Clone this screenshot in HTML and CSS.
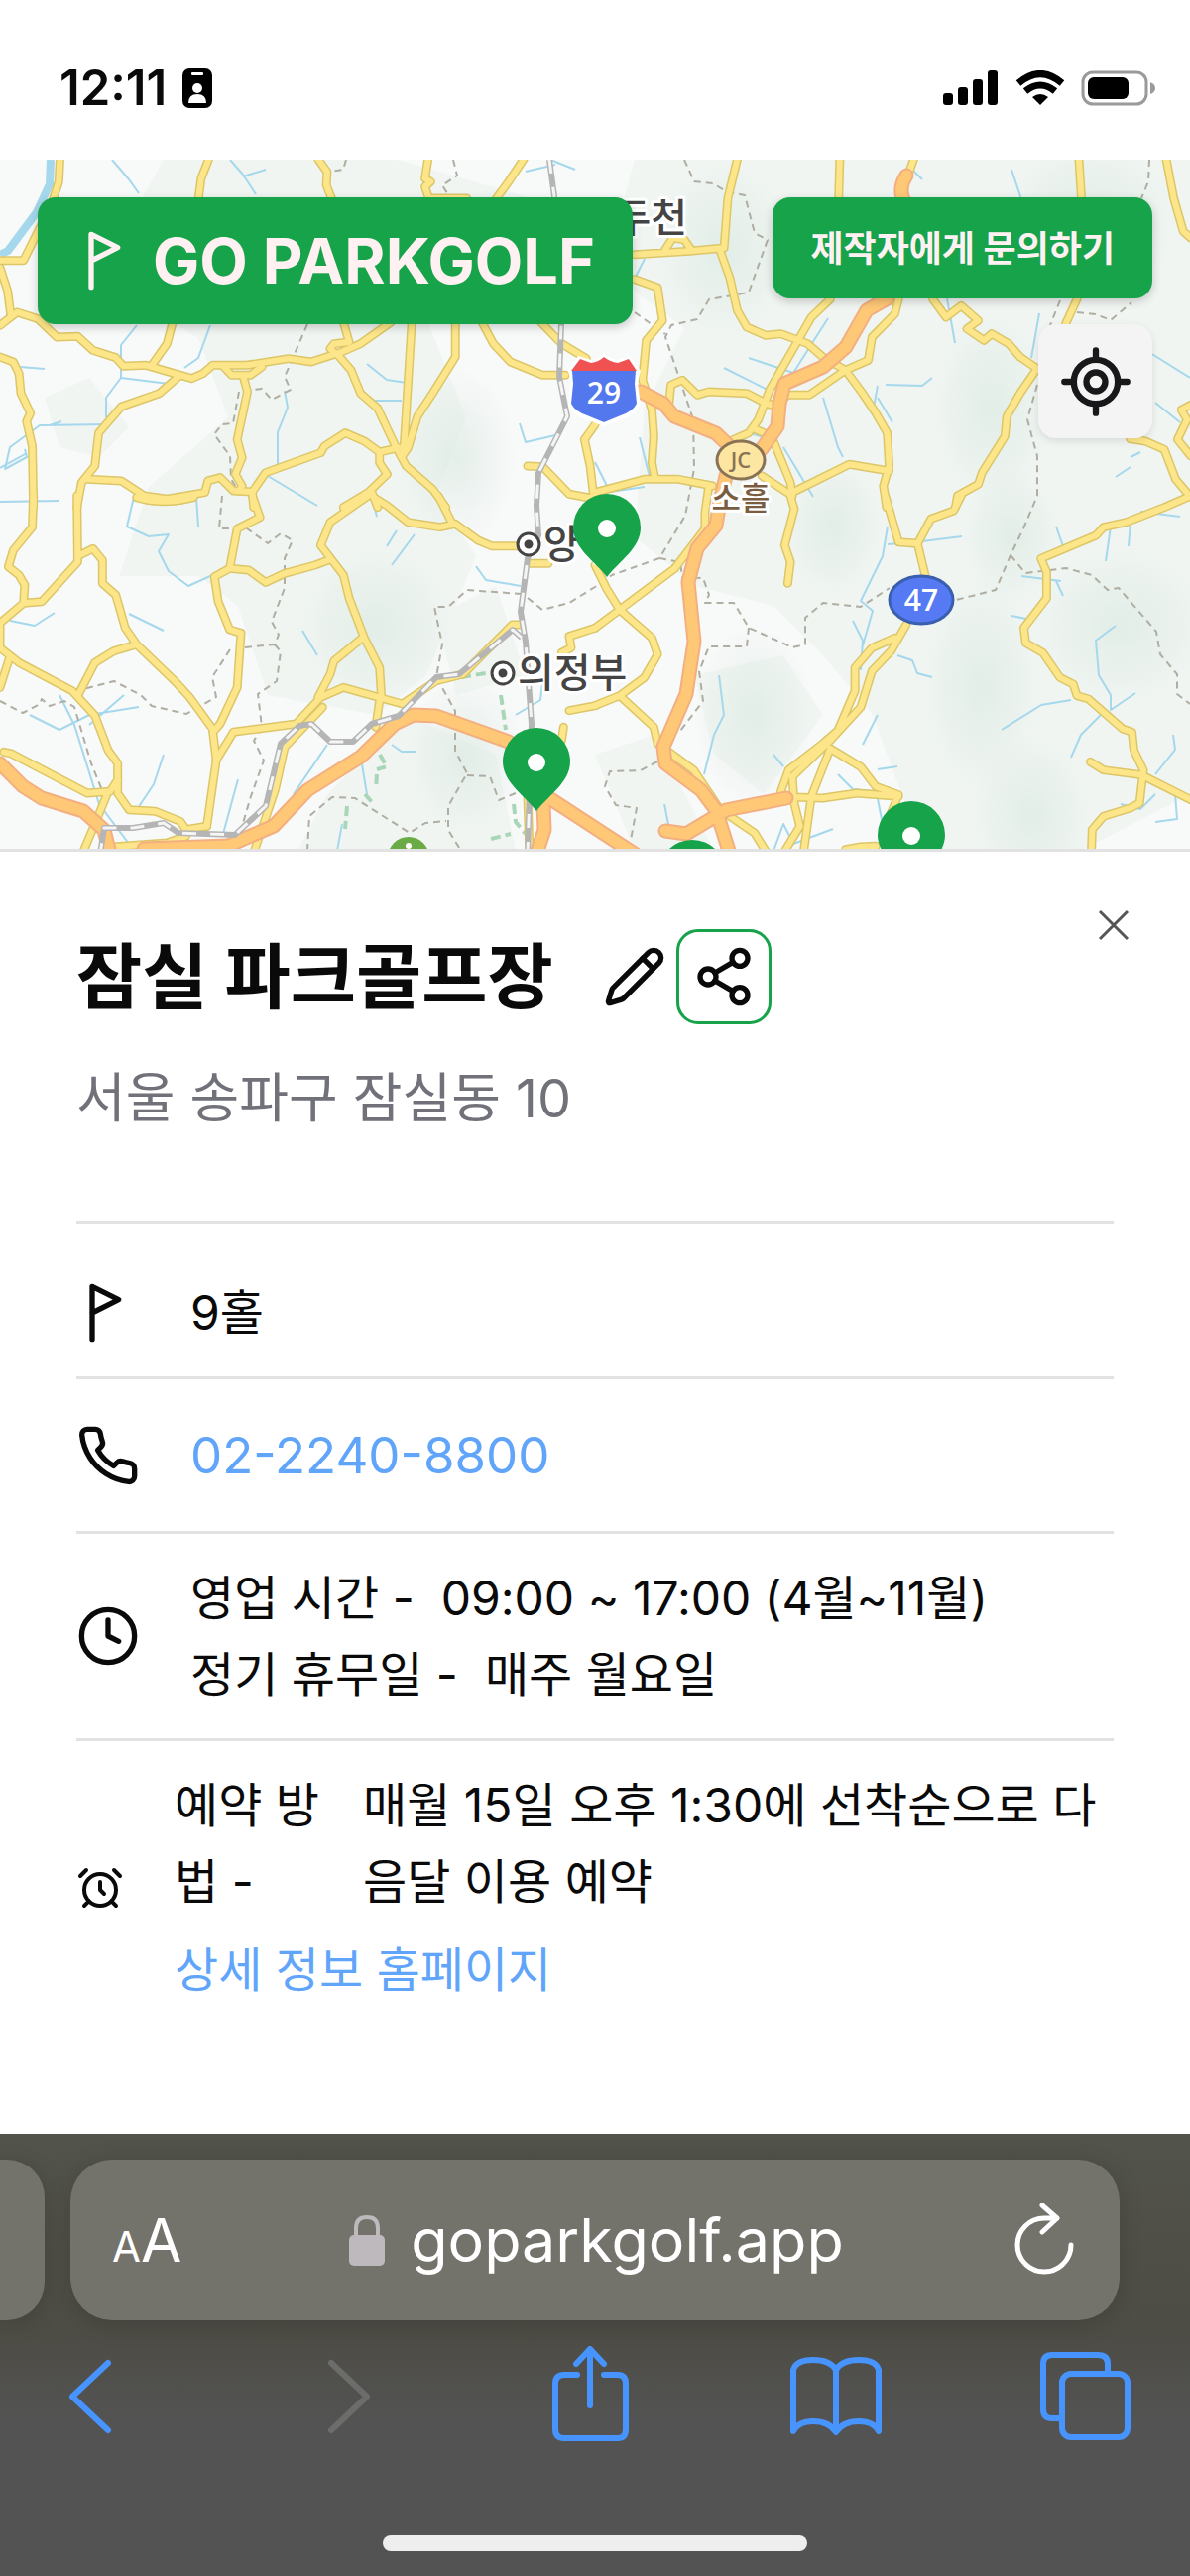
FILE: index.html
```html
<!DOCTYPE html>
<html lang="ko">
<head>
  <meta charset="UTF-8" />
  <meta name="viewport" content="width=device-width, initial-scale=1" />
  <title>GO PARKGOLF</title>
  <link rel="stylesheet" href="styles.css">
</head>
<body>
  <!-- 상태 표시줄 -->
  <header class="status-bar">
    <div class="status-left">
      <span class="time">12:11</span>
      <svg width="30" height="40" viewBox="0 0 30 40">
        <rect width="30" height="40" rx="7"/>
        <rect x="9" y="4" width="12" height="3" rx="1" fill="#fff"/>
        <circle cx="15" cy="20" r="5" fill="#fff"/>
        <path d="M6 35 Q6 26 15 26 Q24 26 24 35 Z" fill="#fff"/>
      </svg>
    </div>
    <div class="status-right">
      <svg width="57" height="36" viewBox="0 0 57 36">
        <rect x="0" y="23" width="10" height="12" rx="3"/>
        <rect x="15" y="17" width="10" height="18" rx="3"/>
        <rect x="30" y="9" width="10" height="26" rx="3"/>
        <rect x="45" y="0" width="10" height="35" rx="3"/>
      </svg>
      <svg width="50" height="36" viewBox="0 0 50 36">
        <path d="M3 13 Q25 -6 47 13" fill="none" stroke="#000" stroke-width="7"/>
        <path d="M10 21 Q25 9 40 21" fill="none" stroke="#000" stroke-width="7"/>
        <path d="M25 35 L17 27 Q25 21 33 27 Z"/>
      </svg>
      <svg width="76" height="36" viewBox="0 0 76 36">
        <rect x="2" y="2" width="64" height="32" rx="10" fill="none" stroke="#9a9a9a" stroke-width="3"/>
        <rect x="7" y="7" width="41" height="22" rx="6"/>
        <path d="M70 12 Q75 14 75 18 Q75 22 70 24 Z" fill="#9a9a9a"/>
      </svg>
    </div>
  </header>

  <!-- 지도 -->
  <main class="map">
    <svg class="map-canvas" viewBox="0 0 1200 697" preserveAspectRatio="xMidYMin slice">
      <defs>
        <radialGradient id="hill">
          <stop offset="0" stop-color="#dceae2" stop-opacity="0.7"/>
          <stop offset="1" stop-color="#dceae2" stop-opacity="0"/>
        </radialGradient>
        <g id="roads">
          <g transform="translate(0 -11) scale(.3827 .3333)">
            <path d="M158 31L155 100L135 170L62 338L0 338M550 31L530 90L522 160M838 31L862 70L860 110L877 160M1128 31L1120 90L1135 100L1120 115L1130 150L1230 150M1380 31L1340 100L1305 155M0 360L20 430L28 500"/>
            <path d="M0 535L45 495L100 515L150 570L205 568L245 610L305 632L325 658L385 655L505 695L535 680L560 655L650 655L760 635L820 645L900 615L950 590L1030 525M455 525L440 590L400 655M905 525L920 585L880 590L870 605L895 630L925 670L950 740L995 785L1040 895L1070 960L1140 1030L1175 1085"/>
            <path d="M0 630L35 645L50 680L55 740L80 800L70 825L85 900L88 1085M470 690L420 740L320 780L260 860L250 960L215 1010L203 1085M590 660L610 685L660 685L690 660M640 685L652 735L625 880L638 935L620 985L638 1020L630 1035"/>
            <path d="M230 1000L320 1005L380 1050L440 1060L540 1040L548 1005L580 995L615 1035L665 1038L700 980L845 920L855 900L910 860L960 885L1000 918L1050 905M665 1038L668 1085M1085 525L1065 890L1060 920M1200 525L1200 630L1140 740L1100 810L1075 905L1060 930M1000 918L1000 950L1020 985L970 1040L905 1085M980 1040L995 1085"/>
            <path d="M1270 525L1300 590L1345 645L1430 685L1490 685M1425 525L1480 590L1545 635M1390 960L1430 962L1500 1045L1570 1060M1568 835L1540 880L1555 960L1565 1060"/>
          </g>
          <g transform="translate(600 -11) scale(.3827 .3333)">
            <path d="M375 31L350 150L340 300L250 310L105 320M185 305L205 270L235 275L255 308M330 310L355 390L375 490L400 540L450 565L490 560L560 590L600 630L660 670L705 740L740 800L770 860L775 960L760 1020L768 1085M645 31L642 155M840 31L825 80M1275 31L1282 155M1505 31L1525 150L1550 250L1570 270"/>
            <path d="M105 395L165 420L178 520L135 580L125 700L150 790L155 870L150 950L158 998M0 1040L130 1000L220 1000L310 1020M620 455L570 510L530 590L460 730L430 820L405 860L365 880M800 455L790 500L730 570L720 640L660 670L565 745L510 745L465 775M195 775L200 715L230 700L270 745L300 735L400 740L450 770L465 775"/>
            <path d="M890 455L925 510L965 475L1010 520L980 545L1025 580L1045 560L1090 590L1120 630L1165 665L1120 740L1085 810L1080 870L1020 980L1010 1015L955 1050L950 1085M1270 455L1240 530M1410 878L1450 885L1500 910L1530 1000L1570 1055M1570 775L1545 790L1560 820L1535 880L1570 930M425 850L465 870L515 1010L520 1050L440 990M520 1040L670 955L775 975"/>
          </g>
          <g transform="translate(0 339) scale(.3827 .3333)">
            <path d="M88 0L85 95L35 165L22 215L50 240L65 270L62 325M203 0L205 200L110 320L62 325L0 385L0 460M210 180L245 160L270 195L270 265L305 300L330 400L360 450L460 560L500 610L560 705L570 800M360 450L300 470L250 505L205 605"/>
            <path d="M0 460L50 505L190 590L250 665L285 770L310 810L310 900L340 950L410 955L475 985L490 1010L545 1000M25 490L0 580M360 5Q430 30 510 5M665 0L685 65L625 100L605 220L565 245L575 320L605 405L635 415L625 580L580 690L565 710M605 220L655 225L700 262L750 235L830 210L865 195"/>
            <path d="M970 0L870 80L845 150L905 240L920 310L960 430L1000 520L1005 610M985 5L1020 30L1075 80L1160 95L1200 85L1260 135L1295 152L1370 152M1155 0L1190 80M955 430L880 500L870 540L838 610M545 1000L570 800L615 715L780 690L845 610L905 580L1060 630L1150 560L1220 540L1350 390L1370 390"/>
            <path d="M10 775L30 780L230 900L290 895L310 860M285 895L255 980L220 1075M850 640L750 760L725 890L670 1075M1000 620L990 700M1568 400L1500 425L1505 460L1480 475M1570 635L1500 650M1485 700L1480 740M1390 900L1395 1075M1395 205L1445 205M300 1062L440 1050L490 1030"/>
          </g>
          <g transform="translate(600 339) scale(.3827 .3333)">
            <path d="M0 210L30 280L65 345L150 430L165 480L130 550L65 605L0 635M0 400L65 345L210 220L290 100L290 50L300 -30M65 605L155 700L165 750L260 830L330 950L420 1020L450 1075M515 0L525 40L500 150L515 200L508 265M765 0L800 140L850 145L870 240M850 145L885 70L945 45L965 0"/>
            <path d="M820 390L780 470L730 530L700 640L620 740L520 850L525 930L540 1000L500 1075M790 430L730 460L685 520L685 590L640 710L600 750L510 830L490 895M620 765L570 910L550 1075M620 765L700 820L740 880L800 905L780 960M525 912L600 915L690 900L800 910M660 1070L700 1062L740 1060"/>
            <path d="M1570 0L1500 35L1400 80L1340 95L1320 120L1175 190L1190 230L1190 310L1130 400L1135 445L1180 475L1225 550L1260 570L1270 605L1300 615L1390 705L1415 715L1420 770L1445 830L1435 930L1410 945L1340 970L1310 1010L1308 1075M1305 805L1340 830L1440 845L1570 920"/>
          </g>
        </g>
        <g id="highways">
          <path d="M914 16Q905 30 912 42M895 140L874 152L853 189L830 209L791 226L786 246L784 269L768 292L747 304M646 234L669 246L680 259L722 276L747 300L732 319L726 345L722 369L703 392L694 426L700 486L692 539L669 592L671 609L707 636L722 656L736 700M793 644L732 656L692 680L671 677"/>
          <path d="M0 609L23 632L42 644L84 657L105 676L111 700M145 695L230 692L276 672L310 636L364 602L398 569L417 560L440 561L513 587L548 640L600 674L640 700M548 650L549 676L541 700"/>
        </g>
        <g id="rail">
          <path d="M554 0L559 37L566 166L564 219L572 259L543 316L541 349L543 379L532 402L525 456L530 486L536 569L532 700M526 482L517 474L463 519L440 522L402 561L375 569L356 587L333 587L314 569L302 571L283 589L268 652L237 681L180 679L165 669L134 674L105 674L101 700"/>
        </g>
      </defs>

      <rect width="1200" height="697" fill="#f8f9f9"/>

      <!-- 산지 -->
      <g class="terrain">
        <path d="M165 0L290 0L400 0L540 40L530 90L430 160L470 260L440 340L480 400L430 520L380 560L270 540L240 450L200 420L120 420L150 330L230 260L200 180L150 150L120 80Z"/>
        <path d="M640 0L1200 0L1200 640L1090 697L930 697L880 560L830 500L780 450L700 430L640 380L650 250L690 170L610 110Z"/>
        <path d="M45 240L90 220L130 270L100 300L60 290ZM300 697L330 640L410 560L500 600L520 697ZM440 460L500 430L530 520L460 540ZM600 600L660 580L720 697L640 697ZM700 520L790 500L830 560L770 640L720 600Z"/>
      </g>
      <g fill="url(#hill)">
        <ellipse cx="730" cy="90" rx="70" ry="90"/>
        <ellipse cx="1000" cy="250" rx="60" ry="100"/>
        <ellipse cx="840" cy="370" rx="50" ry="70"/>
        <ellipse cx="1100" cy="60" rx="90" ry="80"/>
        <ellipse cx="990" cy="530" rx="60" ry="110"/>
        <ellipse cx="1130" cy="470" rx="90" ry="80"/>
        <ellipse cx="1040" cy="660" rx="60" ry="80"/>
        <ellipse cx="760" cy="560" rx="60" ry="90"/>
        <ellipse cx="470" cy="600" rx="60" ry="80"/>
        <ellipse cx="380" cy="470" rx="80" ry="80"/>
        <ellipse cx="460" cy="300" rx="60" ry="90"/>
        <ellipse cx="1020" cy="380" rx="50" ry="70"/>
      </g>

      <!-- 하천 -->
      <path d="M51 0L50 25L37 53L8 92L0 96" class="river"/>
      <g class="streams">
        <path d="M113 0L130 20L140 34M232 0L245 15L258 35M245 17L268 10M212 167L200 200L186 210M138 167L122 187L122 220L170 226M20 209L45 211M122 220L107 240L107 260M107 267L40 268L10 290L5 312L27 300L25 292M0 311L27 296M50 268L62 264M287 233L290 250L280 275L280 308M270 319L320 349M370 206L390 222L410 225M378 243L405 243M524 266L530 285L560 278M555 0L580 10M530 12L560 5"/>
        <path d="M0 345L60 344M135 340L128 370L150 380L170 378L160 395L170 415L190 430L212 420M198 340L200 370M130 458L165 475M10 465L35 470L55 457M125 540L90 570M30 560L60 575L90 560L140 552M395 409L418 378M480 410L490 424L525 430M305 475L320 500M400 374L390 390M375 340L380 360M60 540L75 570L100 650L130 690M165 600L155 630L135 660M240 625L225 680M296 640L330 590M365 610L370 640M395 590L405 597L420 597M520 560L545 545L548 520M320 625L310 640L340 620M340 697L345 670"/>
        <path d="M640 120L650 100M645 280L655 320M755 200L800 215L835 160M730 210L780 235M893 227L930 228L940 220M885 240L900 265M885 228L880 255M790 290L820 340M830 240L845 290L850 300M770 280L752 275M915 5L930 20M1020 10L1030 40M1048 155L1040 200M955 140L963 185M1160 195L1200 220M1165 245L1190 265M1140 300L1150 295M1125 320L1140 310M600 305L615 335L650 330"/>
        <path d="M895 370L890 400L868 445L880 455L870 490M895 388L930 385L970 380M860 465L870 485L868 515M905 500L920 505L925 518L940 522M725 520L730 560L720 580L710 620M870 590L885 560M885 615L905 612M1010 575L1050 550L1080 545M1065 370L1072 390M1120 370L1115 405M1140 365L1138 390M1020 460L1035 463M1125 470L1105 485L1108 520L1120 540L1120 555L1145 538M1110 560L1090 580L1080 603M1165 620L1185 595L1183 580M1185 640L1187 665L1165 668M1130 650L1150 655L1165 640M780 600L790 612M845 620L860 635L880 637M670 650L675 675M780 697L790 670L800 690L840 675M885 645L890 670M1030 420L1070 425M1072 440L1065 425M1150 355L1190 360"/>
      </g>

      <!-- 행정 경계 -->
      <g class="borders">
        <path d="M349 0L346 10L325 13L333 31M457 0L461 16L446 26L453 37M310 166L287 219L293 232L274 242L264 231L256 232M241 234L235 266L224 267L216 277L232 299L233 322L239 332M690 0L700 22L719 24L732 32L751 36L761 74L774 81L755 134L715 141L703 161L677 167L671 179L688 229L699 262L700 312L691 359L665 402L617 419M640 154L671 176M1159 0L1158 22L1151 39M1086 154L1105 156L1120 162L1141 144M1069 142L1059 167M1046 227L1036 262L1046 299L1046 339L1032 372L1019 399L1004 434L964 444"/>
        <path d="M224 339L221 372L249 372L270 387L283 377L295 384L287 402L287 432L274 466L281 479L277 489L247 492M277 489L283 496L279 526L260 539L264 572L256 586L266 606L253 642L243 676M232 494L214 522L218 542L188 559L153 551L142 540L115 526L84 534M0 546L23 558L40 549L42 544L50 551L65 546L75 552L92 609L103 636M526 438L471 434L452 451L438 451L446 489L440 522L459 556L459 596L471 619L452 652L452 676L465 697M471 621L494 622L503 646L520 639M310 697L312 662L335 643L358 644L413 679L429 669L450 667M532 442L547 454L574 447L600 431L617 419"/>
        <path d="M665 402L686 406L688 421L709 422L715 439L711 447L740 447L755 472L799 492L812 489L812 462L830 447L868 451L897 432M755 472L753 491L715 491L705 516L709 546L686 576M663 607L646 616L615 617L610 632L621 651L642 654L636 686M1019 399L1034 417L1075 412L1101 419L1117 434L1128 432L1166 476L1170 499L1187 519L1187 539L1200 549"/>
      </g>
      <path d="M505 540L510 575M383 600L390 612L380 615M380 620L379 635M368 640L375 648M350 652L348 675M518 650L520 668L530 680M495 685L515 680M465 522L490 518" class="trail"/>

      <use href="#roads" class="road-edge"/>
      <use href="#roads" class="road"/>
      <use href="#highways" class="highway-edge"/>
      <use href="#highways" class="highway"/>
      <use href="#rail" class="rail-edge"/>
      <use href="#rail" class="rail"/>

      <!-- 지명 -->
      <g class="city">
        <text x="693" y="73" text-anchor="end">동두천</text>
        <text x="548" y="402">양주</text>
        <text x="522" y="532">의정부</text>
      </g>
      <text x="747" y="353" text-anchor="middle" class="town">소흘</text>
      <g class="city-dot">
        <circle cx="533" cy="388" r="11"/>
        <circle cx="533" cy="388" r="3"/>
        <circle cx="507" cy="518" r="11"/>
        <circle cx="507" cy="518" r="3"/>
      </g>

      <!-- 도로 번호 -->
      <path d="M583 198L596 202Q604 201 609 195Q615 201 623 202L635 198L646 213L643 225L646 248Q640 258 627 262L609 269L591 262Q578 258 573 248L576 225L573 213Z" fill="#fff"/>
      <path d="M585 201L596 205Q604 204 609 199Q615 204 623 205L634 201L642 213L576 213Z" fill="#f05252"/>
      <path d="M577 213L641 213L640 226L642 246Q638 254 626 258L609 265L592 258Q580 254 576 246L578 226Z" fill="#5378ee"/>
      <ellipse cx="747" cy="303" rx="24" ry="19" fill="#fde5a2" stroke="#8a7355" stroke-width="3"/>
      <ellipse cx="929" cy="444" rx="32" ry="24" fill="#567af3" stroke="#3a5fae" stroke-width="3"/>
      <g class="route">
        <text x="609" y="246">29</text>
        <text x="929" y="455">47</text>
        <text x="747" y="311" class="junction">JC</text>
      </g>

      <!-- 파크골프장 핀 -->
      <circle cx="412" cy="704" r="21" fill="#6aab45"/>
      <circle cx="412" cy="692" r="3" fill="#fff"/>
      <defs>
        <g id="pin">
          <path d="M0 83C-12 67 -34 54 -34 33A34 34 0 0 1 34 33C34 54 12 67 0 83Z" fill="#16a34a"/>
          <circle cy="34" r="9" fill="#fff"/>
        </g>
      </defs>
      <use href="#pin" x="612" y="338"/>
      <use href="#pin" x="541" y="574"/>
      <use href="#pin" x="919" y="648"/>
      <use href="#pin" x="698" y="687"/>
    </svg>

    <div class="map-controls">
      <button class="btn btn-logo">
        <svg class="icon" width="64" height="64" viewBox="0 0 24 24"><path d="M6 22V2l10 5-10 5"/></svg>
        GO PARKGOLF
      </button>
      <div class="map-side">
        <button class="btn btn-contact">제작자에게 문의하기</button>
        <button class="btn-locate" aria-label="현재 위치">
          <svg class="icon" width="76" height="76" viewBox="0 0 24 24">
            <circle cx="12" cy="12" r="7"/><circle cx="12" cy="12" r="3"/>
            <path d="M2 12h3M19 12h3M12 2v3M12 19v3"/>
          </svg>
        </button>
      </div>
    </div>
  </main>

  <!-- 상세 정보 -->
  <section class="sheet">
    <button class="btn-close" aria-label="닫기">
      <svg width="32" height="32" viewBox="0 0 32 32"><path d="M2 2L30 30M30 2L2 30"/></svg>
    </button>
    <div class="sheet-title">
      <h1>잠실 파크골프장</h1>
      <button class="btn-edit" aria-label="수정">
        <svg class="icon" width="64" height="64" viewBox="0 0 24 24">
          <path d="M21.174 6.812a1 1 0 0 0-3.986-3.987L3.842 16.174a2 2 0 0 0-.5.83l-1.321 4.352a.5.5 0 0 0 .623.622l4.353-1.32a2 2 0 0 0 .83-.497z"/>
          <path d="m15 5 4 4"/>
        </svg>
      </button>
      <button class="btn-share" aria-label="공유">
        <svg class="icon" width="64" height="64" viewBox="0 0 24 24">
          <circle cx="18" cy="5" r="3"/><circle cx="6" cy="12" r="3"/><circle cx="18" cy="19" r="3"/>
          <path d="M8.59 13.51l6.83 3.98M15.41 6.51l-6.82 3.98"/>
        </svg>
      </button>
    </div>
    <p class="address">서울 송파구 잠실동 10</p>

    <ul class="info">
      <li class="info-holes">
        <svg class="icon" width="64" height="64" viewBox="0 0 24 24"><path d="M6 22V2l10 5-10 5"/></svg>
        <span>9홀</span>
      </li>
      <li class="info-phone">
        <svg class="icon" width="64" height="64" viewBox="0 0 24 24">
          <path d="M22 16.92v3a2 2 0 0 1-2.18 2 19.79 19.79 0 0 1-8.63-3.07 19.5 19.5 0 0 1-6-6 19.79 19.79 0 0 1-3.07-8.67A2 2 0 0 1 4.11 2h3a2 2 0 0 1 2 1.72 12.84 12.84 0 0 0 .7 2.81 2 2 0 0 1-.45 2.11L8.09 9.91a16 16 0 0 0 6 6l1.27-1.27a2 2 0 0 1 2.11-.45 12.84 12.84 0 0 0 2.81.7A2 2 0 0 1 22 16.92z"/>
        </svg>
        <a href="tel:02-2240-8800">02-2240-8800</a>
      </li>
      <li class="info-hours">
        <svg class="icon" width="64" height="64" viewBox="0 0 24 24">
          <circle cx="12" cy="12" r="10"/><path d="M12 6v6l4 2"/>
        </svg>
        <div>
          <div>영업 시간 -&nbsp; 09:00 ~ 17:00 (4월~11월)</div>
          <div>정기 휴무일 -&nbsp; 매주 월요일</div>
        </div>
      </li>
      <li class="info-booking">
        <svg class="icon" width="48" height="48" viewBox="0 0 24 24">
          <circle cx="12" cy="13" r="8"/><path d="M12 9v4l2 2M5 3 2 6M22 6l-3-3M6.380 18.700 4 21M17.640 18.670 20 21"/>
        </svg>
        <div>
          <div class="booking">
            <span class="booking-label">예약 방법 -</span>
            <span>매월 15일 오후 1:30에 선착순으로 다음달 이용 예약</span>
          </div>
          <a href="#">상세 정보 홈페이지</a>
        </div>
      </li>
    </ul>
  </section>

  <!-- 브라우저 하단 -->
  <footer class="browser">
    <div class="tabs">
      <div class="tab-prev"></div>
      <div class="url-bar">
        <button class="btn-text" aria-label="글자 크기"><small>A</small>A</button>
        <div class="url">
          <svg width="36" height="52" viewBox="0 0 36 52">
            <rect y="21" width="36" height="31" rx="5" fill="#bdb9bd"/>
            <path d="M7 22V14Q7 3 18 3Q29 3 29 14V22" fill="none" stroke="#bdb9bd" stroke-width="4"/>
          </svg>
          <input type="text" value="goparkgolf.app" aria-label="주소">
        </div>
        <button class="btn-reload" aria-label="새로고침">
          <svg width="60" height="74" viewBox="0 0 60 74">
            <path d="M57 42A27 27 0 1 1 30 15H43M28 2L43 15L28 29"/>
          </svg>
        </button>
      </div>
    </div>
    <nav class="toolbar">
      <button aria-label="뒤로"><svg width="90" height="100" viewBox="0 0 90 100"><path d="M61 17L25 51L61 85"/></svg></button>
      <button class="off" aria-label="앞으로"><svg width="90" height="100" viewBox="0 0 90 100"><path d="M36 17L72 51L36 85"/></svg></button>
      <button aria-label="공유">
        <svg width="90" height="100" viewBox="0 0 90 100">
          <path d="M35 29H22Q13 29 13 38V84Q13 93 22 93H76Q84 93 84 84V38Q84 29 76 29H62M48 60V3M34 18L48 3L62 18"/>
        </svg>
      </button>
      <button aria-label="책갈피">
        <svg width="92" height="100" viewBox="-1 0 92 100">
          <path d="M45 24Q39 14 22 14Q5 14 2 24V86Q7 76 22 76Q38 76 45 87Q52 76 68 76Q83 76 88 86V24Q85 14 68 14Q51 14 45 24V86"/>
        </svg>
      </button>
      <button aria-label="탭">
        <svg width="92" height="100" viewBox="-1 0 92 100">
          <rect x="22" y="28" width="66" height="64" rx="9"/>
          <path d="M21 73H12Q3 73 3 64V18Q3 9 12 9H58Q68 9 68 18V27"/>
        </svg>
      </button>
    </nav>
    <div class="home-bar"></div>
  </footer>
</body>
</html>
```
FILE: styles.css
```css
* {
  box-sizing: border-box;
}

body {
  font-family: Inter, 'Noto Sans CJK KR', sans-serif;
  color: #0a0a0a;
  background-color: white;
  margin: 0;
  min-height: 100vh;
  display: flex;
  flex-direction: column;
}

button {
  padding: 0;
  border: none;
  background: none;
  font-family: inherit;
  color: inherit;
  cursor: pointer;
}

svg {
  display: block;
  flex-shrink: 0;
}

a {
  color: #60a5fa;
  text-decoration: none;
}

.icon {
  fill: none;
  stroke: currentColor;
  stroke-width: 2;
  stroke-linecap: round;
  stroke-linejoin: round;
}

/* status bar */
.status-bar {
  height: 161px;
  padding: 16px 34px 0 60px;
  display: flex;
  justify-content: space-between;
  align-items: center;
}

.status-left, .status-right {
  display: flex;
  align-items: center;
  gap: 16px;
}

.time {
  font-size: 49px;
  font-weight: 600;
}

/* map */
.map {
  position: relative;
  flex: 1 0 400px;
  overflow: hidden;
}

.map-canvas {
  position: absolute;
  inset: 0;
  width: 100%;
  height: 100%;
}

.map-canvas path {
  vector-effect: non-scaling-stroke;
}

.terrain {
  fill: #f0f5f2;
}

.river, .streams, .borders, .trail, .road, .road-edge, .highway, .highway-edge, .rail, .rail-edge {
  fill: none;
  stroke-linejoin: round;
}

.river {
  stroke: #a5d8ec;
  stroke-width: 8;
}

.streams {
  stroke: #a5d8ec;
  stroke-width: 2;
}

.borders {
  stroke: #b0aea2;
  stroke-width: 2;
  stroke-dasharray: 7 5;
}

.trail {
  stroke: #a9d5b8;
  stroke-width: 4;
  stroke-dasharray: 10 5;
}

.road-edge {
  stroke: #dcc668;
  stroke-width: 9;
  stroke-linecap: round;
}

.road {
  stroke: #fde68a;
  stroke-width: 6;
  stroke-linecap: round;
}

.highway-edge {
  stroke: #f3af80;
  stroke-width: 15;
  stroke-linecap: round;
}

.highway {
  stroke: #fec877;
  stroke-width: 11;
  stroke-linecap: round;
}

.rail-edge {
  stroke: #b5b5b5;
  stroke-width: 6;
}

.rail {
  stroke: #f5f5f5;
  stroke-width: 3;
  stroke-dasharray: 14 14;
}

.city text, .town {
  font-family: 'Noto Sans CJK KR', sans-serif;
  font-size: 40px;
  font-weight: 500;
  fill: #444;
  stroke: white;
  stroke-width: 6px;
  stroke-linejoin: round;
  paint-order: stroke;
}

.map-canvas .town {
  font-size: 32px;
  fill: #7a5c40;
}

.city-dot circle {
  fill: #444;
  stroke: #444;
  stroke-width: 3;
}

.city-dot circle:nth-child(odd) {
  fill: white;
}

.route text {
  font-family: 'Open Sans', sans-serif;
  font-size: 30px;
  font-weight: 600;
  fill: white;
  text-anchor: middle;
}

.map-canvas .junction {
  font-size: 22px;
  fill: #8a7355;
}

.map-controls {
  position: relative;
  padding: 38px;
  display: flex;
  justify-content: space-between;
  align-items: flex-start;
}

.map-side {
  display: flex;
  flex-direction: column;
  align-items: flex-end;
  gap: 26px;
}

.btn {
  background-color: #16a34a;
  color: #fff1f2;
  border-radius: 18px;
  box-shadow: 0 3px 10px rgba(0, 0, 0, 0.2);
}

.btn-logo {
  height: 128px;
  padding: 0 38px;
  display: flex;
  align-items: center;
  gap: 14px;
  font-size: 63px;
  font-weight: 700;
}

.btn-contact {
  height: 102px;
  padding: 0 38px 4px;
  font-size: 36px;
  font-weight: 700;
}

.btn-locate {
  width: 115px;
  height: 115px;
  display: flex;
  align-items: center;
  justify-content: center;
  background-color: #f4f4f5;
  color: #18181b;
  border-radius: 18px;
  box-shadow: 0 3px 8px rgba(0, 0, 0, 0.1);
}

/* sheet */
.sheet {
  position: relative;
  border-top: 3px solid #e2e2e2;
  padding: 78px 77px 127px;
}

.btn-close {
  position: absolute;
  top: 58px;
  right: 61px;
}

.btn-close path {
  stroke: #555;
  stroke-width: 3;
}

.sheet-title {
  display: flex;
  align-items: center;
}

h1 {
  font-size: 72px;
  font-weight: 700;
  line-height: 96px;
  margin: 0;
}

.btn-edit {
  margin-left: 50px;
}

.btn-share {
  margin-left: 10px;
  padding: 13px;
  border: 3px solid #16a34a;
  border-radius: 22px;
}

.address {
  margin: 35px 0 83px;
  font-size: 54px;
  line-height: 80px;
  color: #71717a;
}

.info {
  list-style: none;
  margin: 0;
  padding: 0;
  font-size: 48px;
  line-height: 77px;
}

.info li {
  display: flex;
  align-items: center;
  gap: 51px;
  border-top: 3px solid #e2e2e2;
  padding: 26px 0;
}

.info .info-holes {
  padding: 51px 0 26px;
}

.info .info-phone {
  padding: 38px 0;
}

.info-phone a {
  font-size: 51px;
}

.info .info-booking {
  padding-bottom: 0;
}

.booking {
  display: flex;
  gap: 24px;
  margin-bottom: 12px;
}

.booking-label {
  flex: 0 0 166px;
}

/* browser */
.browser {
  background: linear-gradient(to bottom, #52534a, #4d4c45 45%, #535353 65%, #535353);
  padding-top: 26px;
}

.tabs {
  display: flex;
  gap: 26px;
  padding-right: 71px;
}

.tab-prev, .url-bar {
  height: 162px;
  background-color: #73736b;
  box-shadow: 0 4px 24px rgba(0, 0, 0, 0.15);
}

.tab-prev {
  width: 45px;
  border-radius: 0 38px 38px 0;
}

.url-bar {
  flex: 1;
  padding: 0 46px 0 42px;
  border-radius: 42px;
  display: flex;
  align-items: center;
  justify-content: space-between;
  color: white;
}

.btn-text {
  font-size: 60px;
}

.btn-text small {
  font-size: 42px;
}

.url {
  display: flex;
  align-items: center;
  gap: 26px;
}

.url input {
  width: 440px;
  padding: 0;
  border: none;
  background: none;
  color: white;
  font-family: inherit;
  font-size: 61px;
}

.btn-reload path {
  fill: none;
  stroke: white;
  stroke-width: 5;
  stroke-linecap: round;
  stroke-linejoin: round;
}

.toolbar {
  display: flex;
  justify-content: space-between;
  padding: 26px 60px 0 48px;
}

.toolbar svg {
  fill: none;
  stroke: #4794ff;
  stroke-width: 6;
  stroke-linecap: round;
  stroke-linejoin: round;
}

.toolbar .off svg {
  stroke: #6c6c6a;
}

.home-bar {
  width: 428px;
  max-width: 60%;
  height: 16px;
  margin: 91px auto 25px;
  border-radius: 8px;
  background-color: #eee;
}
```
